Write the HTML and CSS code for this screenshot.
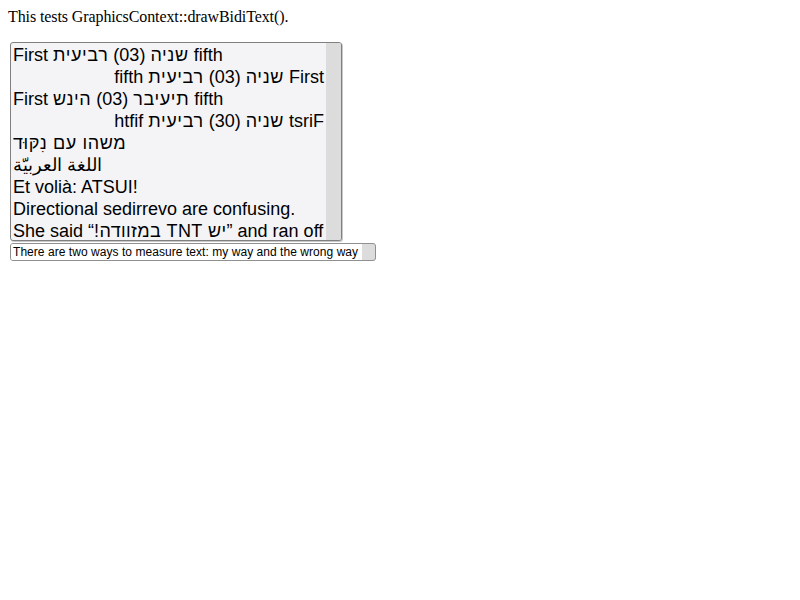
FILE: index.html
```html
<!DOCTYPE html>
<html>
<head>
<meta charset="utf-8">
<link rel="stylesheet" href="styles.css">
</head>
<body>
<p class="intro">This tests GraphicsContext::drawBidiText().</p>
<div class="listbox">
  <div class="items">
    <div class="opt">First <span class="he">שניה</span> (03) <span class="he">רביעית</span> fifth</div>
    <div class="opt rtl">First <span class="he">שניה</span> (03) <span class="he">רביעית</span> fifth</div>
    <div class="opt ovr">First <span class="he">שניה</span> (03) <span class="he">רביעית</span> fifth</div>
    <div class="opt rtl ovr">First <span class="he">שניה</span> (03) <span class="he">רביעית</span> fifth</div>
    <div class="opt"><span class="he">משהו עם נִקּוּד</span></div>
    <div class="opt"><span class="ar">اللغة العربيّة</span></div>
    <div class="opt">Et volià: ATSUI!</div>
    <div class="opt">Directional <span class="rlo">overrides</span> are confusing.</div>
    <div class="opt">She said “<span class="emb">יש TNT במזוודה!</span>” and ran off</div>
  </div>
  <div class="track"></div>
</div>
<div class="popup">
  <div class="ptext">There are two ways to measure text: my way and the wrong way</div>
  <div class="pbtn"></div>
</div>
</body>
</html>
```
FILE: styles.css
```css
html, body { margin: 0; padding: 0; background: #fff; }
body { padding: 8px; font-family: "Liberation Serif", serif; font-size: 16px; }
.intro { margin: 0 0 16px 0; line-height: 18px; color: #000; letter-spacing: -0.1px; }
.listbox {
  display: flex;
  margin-left: 2px;
  width: 330px;
  height: 197px;
  border: 1px solid #808080;
  border-radius: 3px;
  background: #f4f4f6;
  overflow: hidden;
  box-shadow: 1px 1px 0 #c8c8c8;
}
.items {
  flex: 1;
  padding: 1px 2px 0 2px;
  font-family: "Liberation Sans", Arial, sans-serif;
  font-size: 18px;
  color: #000;
}
.opt { height: 22px; line-height: 22px; white-space: nowrap; direction: ltr; text-align: start; }
.opt.rtl { direction: rtl; }
.opt.ovr { unicode-bidi: bidi-override; }
.he { letter-spacing: 0.6px; }
.ar { letter-spacing: 0.5px; }
.rlo { direction: rtl; unicode-bidi: bidi-override; }
.emb { direction: rtl; unicode-bidi: embed; letter-spacing: 0.37px; }
.track { width: 15px; background: #dcdcdc; }
.popup {
  display: flex;
  margin-left: 2px;
  margin-top: 2px;
  width: 364px;
  height: 16px;
  border: 1px solid #909090;
  border-radius: 3px;
  background: #dcdcdc;
  overflow: hidden;
}
.ptext {
  background: #fff;
  font-family: "Liberation Sans", Arial, sans-serif;
  font-size: 12px;
  line-height: 16px;
  padding: 0 4px 0 2px;
  white-space: nowrap;
  letter-spacing: 0.05px;
  color: #000;
}
.pbtn { flex: 1; }
```
